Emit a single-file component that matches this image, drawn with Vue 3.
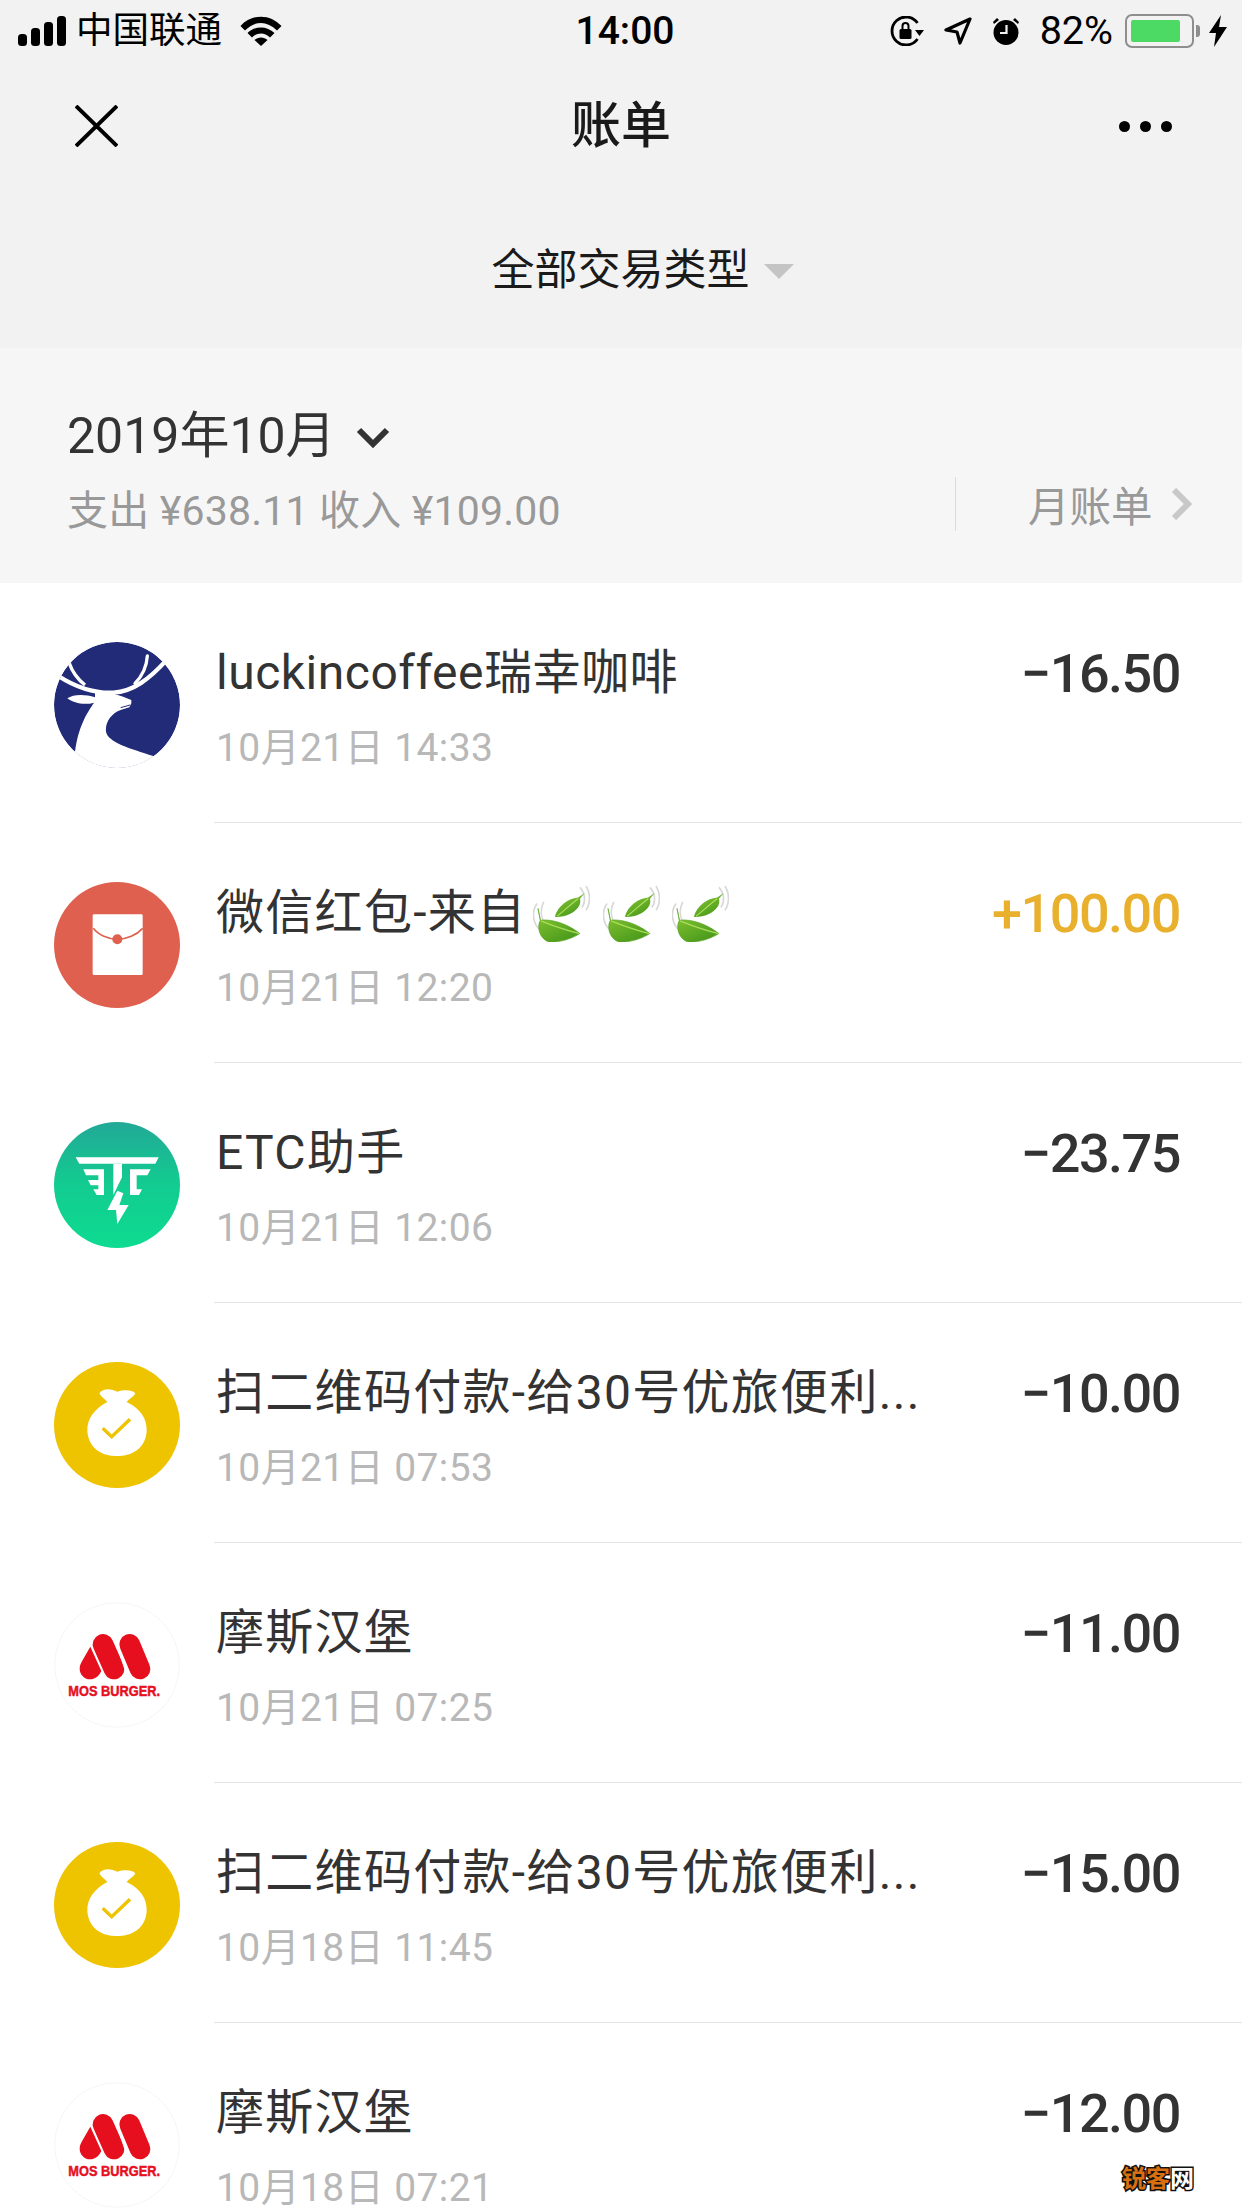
<script setup>
const bills = [
  { name: 'luckincoffee瑞幸咖啡', time: '10月21日 14:33', amount: '−16.50', icon: 'luckin', latin: true },
  { name: '微信红包-来自', time: '10月21日 12:20', amount: '+100.00', icon: 'packet', income: true, leaves: 3 },
  { name: 'ETC助手', time: '10月21日 12:06', amount: '−23.75', icon: 'etc' },
  { name: '扫二维码付款-给30号优旅便利...', time: '10月21日 07:53', amount: '−10.00', icon: 'bag' },
  { name: '摩斯汉堡', time: '10月21日 07:25', amount: '−11.00', icon: 'mos' },
  { name: '扫二维码付款-给30号优旅便利...', time: '10月18日 11:45', amount: '−15.00', icon: 'bag' },
  { name: '摩斯汉堡', time: '10月18日 07:21', amount: '−12.00', icon: 'mos' }
]
</script>

<template>
  <div class="page">
    <header class="top">
      <div class="status">
        <div class="status-left">
          <div class="signal"><i></i><i></i><i></i><i></i></div>
          <span class="carrier">中国联通</span>
          <svg class="wifi" viewBox="0 0 42 30">
            <path d="M0.5 10 C12 -2.5 30 -2.5 41.5 10 L37 14.5 C27 4.500 15 4.500 5 14.500 Z" fill="#000" />
            <path d="M7.500 17 C15 9.500 27 9.500 34.500 17 L30 21.500 C24.500 16 17.500 16 12 21.500 Z" fill="#000" />
            <path d="M14.500 24 C18 20.500 24 20.500 27.500 24 L21 30 Z" fill="#000" />
          </svg>
        </div>
        <div class="clock">14:00</div>
        <div class="status-right">
          <svg class="st-lock" viewBox="0 0 34 30">
            <path d="M27.500 7 A14 14 0 1 0 27.500 23" fill="none" stroke="#000" stroke-width="2.800" />
            <path d="M25 14 L34 14 L29.500 20 Z" fill="#000" />
            <rect x="9.500" y="13" width="12" height="10" rx="1.500" fill="#000" />
            <path d="M12.500 13 V10 A3 3 0 0 1 18.500 10 V13" fill="none" stroke="#000" stroke-width="2" />
          </svg>
          <svg class="st-loc" viewBox="0 0 28 28">
            <path d="M26 2 L2 13 L13 15 L16 26 Z" fill="none" stroke="#000" stroke-width="3.200" stroke-linejoin="round" />
          </svg>
          <svg class="st-alarm" viewBox="0 0 28 28">
            <circle cx="14" cy="15.500" r="12.500" fill="#000" />
            <path d="M1 5 L5 1 L7 3 L2 7 Z M27 5 L23 1 L21 3 L26 7 Z" fill="#000" />
            <path d="M14.500 8 V16 H8" fill="none" stroke="#f2f2f2" stroke-width="2.200" />
          </svg>
          <span class="percent">82%</span>
          <div class="battery"><div class="battery-fill"></div></div>
          <div class="battery-nub"></div>
          <svg class="st-bolt" viewBox="0 0 18 32">
            <path d="M12 0 L0 18 H7 L5 32 L18 12 H10 Z" fill="#000" />
          </svg>
        </div>
      </div>

      <nav class="nav">
        <svg class="close" viewBox="0 0 43 42">
          <path d="M1 1 L42 41 M42 1 L1 41" stroke="#000" stroke-width="4" fill="none" />
        </svg>
        <div class="nav-title">账单</div>
        <div class="more"><i></i><i></i><i></i></div>
      </nav>

      <div class="filter">
        <span>全部交易类型</span>
        <div class="filter-arrow"></div>
      </div>
    </header>

    <section class="month">
      <div class="month-info">
        <div class="month-title">
          <span>2019年10月</span>
          <svg class="month-chevron" viewBox="0 0 34 21">
            <path d="M3 3 L17 17 L31 3" fill="none" stroke="#333" stroke-width="6" />
          </svg>
        </div>
        <div class="month-sum">支出 ¥638.11 收入 ¥109.00</div>
      </div>
      <div class="month-link">
        <span>月账单</span>
        <svg class="link-chevron" viewBox="0 0 21 32">
          <path d="M3 2 L17 16 L3 30" fill="none" stroke="#c8c8c8" stroke-width="6" />
        </svg>
      </div>
    </section>

    <main class="list">
      <div v-for="(bill, i) in bills" :key="i" class="row">
        <div class="avatar">
          <svg v-if="bill.icon === 'luckin'" viewBox="72 66 378 378">
            <clipPath id="deer-clip"><circle cx="261" cy="255" r="189" /></clipPath>
            <g clip-path="url(#deer-clip)">
              <circle cx="261" cy="255" r="189" fill="#222b78" />
              <path d="M135 395 C145 320 170 280 192 248 C165 256 130 250 112 235 C130 222 165 222 195 232 L195 212 L252 222 C270 226 290 234 304 240 L304 250 L298 262 L272 270 C245 280 225 305 228 335 C235 368 300 385 370 408 L370 460 L130 460 Z" fill="#fff" />
              <path d="M85 168 C150 210 200 220 250 218 C310 215 360 175 408 122" fill="none" stroke="#fff" stroke-width="13" />
              <path d="M118 130 C125 150 140 175 165 195" fill="none" stroke="#fff" stroke-width="10" />
              <path d="M352 108 C350 140 340 165 315 190" fill="none" stroke="#fff" stroke-width="10" stroke-linecap="round" />
              <path d="M272 263 L300 255" stroke="#222b78" stroke-width="3" fill="none" />
            </g>
          </svg>

          <svg v-else-if="bill.icon === 'packet'" viewBox="72 66 378 378">
            <circle cx="261" cy="255" r="189" fill="#e0604f" />
            <rect x="188" y="163" width="150" height="182" rx="4" fill="#fff" />
            <path d="M190 205 C205 225 235 238 262 238 C290 238 320 225 338 205" fill="none" stroke="#e0604f" stroke-width="5" />
            <circle cx="262" cy="238" r="15" fill="#e0604f" />
          </svg>

          <svg v-else-if="bill.icon === 'etc'" viewBox="72 66 378 378">
            <linearGradient id="etc-bg" x1="0" y1="0" x2="0" y2="1">
              <stop offset="0" stop-color="#22a997" />
              <stop offset="0.5" stop-color="#12cc90" />
              <stop offset="1" stop-color="#0edb91" />
            </linearGradient>
            <circle cx="261" cy="255" r="189" fill="url(#etc-bg)" />
            <path d="M137 172 H386 L376 191 H148 Z" fill="#fff" />
            <path d="M250 191 H276 V232 L250 285 Z" fill="#fff" />
            <path d="M160 208 H222 V285 H200 L190 268 H205 V256 H182 L174 240 H205 V226 H168 Z" fill="#fff" />
            <path d="M300 208 H362 L352 226 H320 V268 H336 L327 285 H300 Z" fill="#fff" />
            <path d="M262 272 L232 330 H258 L262 372 L296 315 H268 L280 280 Z" fill="#fff" />
          </svg>

          <svg v-else-if="bill.icon === 'bag'" viewBox="72 66 378 378">
            <circle cx="261" cy="255" r="189" fill="#eec300" />
            <path d="M208 160 C222 142 245 148 262 155 C280 150 305 148 316 160 C310 172 296 178 290 186 C330 205 352 235 350 275 C345 330 300 348 262 348 C220 348 178 330 172 275 C170 235 195 205 232 186 C225 178 214 172 208 160 Z" fill="#fff" />
            <path d="M218 265 L245 290 L300 238" fill="none" stroke="#eec300" stroke-width="10" />
          </svg>

          <svg v-else viewBox="72 36 378 378">
            <circle cx="261" cy="225" r="187" fill="#fff" stroke="#f0f0f0" stroke-width="2" />
            <path d="M181 170 L214 243 C205 262 192 268 180 268 C162 268 149 252 149 236 C149 226 153 220 156 214 Z" fill="#e60f1e" />
            <path d="M219 163 L252 237" stroke="#e60f1e" stroke-width="62" stroke-linecap="round" fill="none" />
            <path d="M299 163 L330 237" stroke="#e60f1e" stroke-width="62" stroke-linecap="round" fill="none" />
            <path d="M256 150 L290 250" stroke="#fff" stroke-width="5" fill="none" />
            <text x="115" y="318" class="mos-text" textLength="275" lengthAdjust="spacingAndGlyphs">MOS BURGER.</text>
          </svg>
        </div>

        <div class="row-body">
          <div class="row-main">
            <div class="row-name" :class="{ latin: bill.latin }">
              <span class="row-name-text">{{ bill.name }}</span>
              <svg v-for="n in bill.leaves || 0" :key="n" class="leaf" viewBox="50 75 170 170">
                <defs>
                  <linearGradient :id="'leaf-grad-' + n" x1="0" y1="0" x2="0.6" y2="1">
                    <stop offset="0" stop-color="#8ecb35" />
                    <stop offset="1" stop-color="#4a9a1c" />
                  </linearGradient>
                </defs>
                <path d="M190 82 C206 100 208 125 196 142 M208 78 C222 100 222 130 208 150 M82 125 C70 150 74 175 88 192 M62 130 C44 155 50 190 70 208" fill="none" stroke="#d8d8d8" stroke-width="5" />
                <path d="M65 145 L72 180 C60 200 70 240 102 246 C140 245 170 232 190 220 C160 195 110 175 72 180 Z" :fill="'url(#leaf-grad-' + n + ')'" stroke="#5aa321" stroke-width="2" />
                <path d="M74 182 C105 195 150 210 188 220" fill="none" stroke="#a9dd58" stroke-width="4" />
                <path d="M115 170 C125 135 155 115 185 112 L205 98 L190 116 C198 140 165 172 115 170 Z" :fill="'url(#leaf-grad-' + n + ')'" />
                <path d="M122 168 C145 150 165 130 185 116" fill="none" stroke="#b3e063" stroke-width="3" />
              </svg>
            </div>
            <div class="row-time">{{ bill.time }}</div>
          </div>
          <div class="row-amount" :class="{ income: bill.income }">{{ bill.amount }}</div>
        </div>
      </div>
    </main>

    <div class="watermark"><span class="wm-orange">锐客</span><span class="wm-white">网</span></div>
  </div>
</template>

<style>
html,
body {
  margin: 0;
  background: #fff;
}
</style>

<style scoped>
.page {
  position: relative;
  width: 1242px;
  height: 2208px;
  overflow: hidden;
  background: #fff;
  font-family: Roboto, "Noto Sans CJK SC", sans-serif;
  color: #333;
}

/* top bar */
.top {
  height: 348px;
  background: #f2f2f2;
}

.status {
  height: 62px;
  display: grid;
  grid-template-columns: 1fr auto 1fr;
  align-items: center;
  color: #000;
}

.status-left {
  display: flex;
  align-items: center;
  padding-left: 18px;
}

.signal {
  display: flex;
  align-items: flex-end;
  gap: 4px;
  height: 30px;
}

.signal i {
  display: block;
  width: 9px;
  border-radius: 3.5px;
  background: #000;
}

.signal i:nth-child(1) { height: 12px; }
.signal i:nth-child(2) { height: 18px; }
.signal i:nth-child(3) { height: 24px; }
.signal i:nth-child(4) { height: 30px; }

.carrier {
  margin-left: 10px;
  font-size: 36.500px;
  line-height: 44px;
}

.wifi {
  width: 42px;
  height: 30px;
  margin-left: 18px;
}

.clock {
  font-size: 39px;
  font-weight: 500;
  line-height: 44px;
  padding-left: 8px;
}

.status-right {
  display: flex;
  align-items: center;
  justify-content: flex-end;
  padding-right: 15px;
}

.st-lock { width: 34px; height: 30px; }
.st-loc { width: 28px; height: 28px; margin-left: 20px; }
.st-alarm { width: 28px; height: 28px; margin-left: 20px; }

.percent {
  margin-left: 20px;
  font-size: 39.500px;
  line-height: 44px;
}

.battery {
  box-sizing: border-box;
  width: 69px;
  height: 34px;
  margin-left: 12px;
  padding: 4px 12px 4px 4px;
  border: 2.500px solid #8e8e8e;
  border-radius: 7px;
}

.battery-fill {
  height: 100%;
  background: #4cd964;
  border-radius: 2px;
}

.battery-nub {
  width: 4px;
  height: 12px;
  margin-left: 2px;
  background: #8e8e8e;
  border-radius: 0 3px 3px 0;
}

.st-bolt { width: 18px; height: 32px; margin-left: 9px; }

.nav {
  height: 128px;
  display: grid;
  grid-template-columns: 1fr auto 1fr;
  align-items: center;
}

.close {
  width: 43px;
  height: 42px;
  margin-left: 75px;
}

.nav-title {
  font-size: 50px;
  font-weight: 500;
  line-height: 60px;
  color: #1a1a1a;
}

.more {
  display: flex;
  justify-content: flex-end;
  gap: 10px;
  padding-right: 70px;
}

.more i {
  display: block;
  width: 11px;
  height: 11px;
  border-radius: 50%;
  background: #000;
}

.filter {
  box-sizing: border-box;
  height: 158px;
  padding: 0 0 6px 43px;
  display: flex;
  align-items: center;
  justify-content: center;
  gap: 14px;
  font-size: 43px;
  color: #1a1a1a;
}

.filter-arrow {
  width: 0;
  height: 0;
  margin-top: 10px;
  border-left: 15px solid transparent;
  border-right: 15px solid transparent;
  border-top: 15px solid #c4c4c4;
}

/* month summary */
.month {
  box-sizing: border-box;
  height: 235px;
  padding: 0 52px 0 67px;
  display: flex;
  justify-content: space-between;
  background: #f6f6f6;
}

.month-info {
  padding-top: 58px;
}

.month-title {
  display: flex;
  align-items: center;
  font-size: 50px;
  line-height: 60px;
  color: #333;
}

.month-chevron {
  width: 34px;
  height: 21px;
  margin-left: 20px;
  margin-top: 2px;
}

.month-sum {
  margin-top: 20px;
  font-size: 41px;
  letter-spacing: 0.2px;
  line-height: 50px;
  color: #999;
}

.month-link {
  box-sizing: border-box;
  flex: none;
  display: flex;
  align-items: center;
  gap: 18px;
  width: 235px;
  height: 54px;
  margin-top: 129px;
  padding-left: 72px;
  border-left: 1px solid #dcdcdc;
  font-size: 41.500px;
  white-space: nowrap;
  color: #999;
}

.link-chevron {
  width: 21px;
  height: 32px;
  flex: none;
}

/* bill rows */
.row {
  display: flex;
  height: 240px;
}

.avatar {
  flex: none;
  width: 126px;
  height: 126px;
  margin: 59px 34px 0 54px;
}

.avatar svg {
  display: block;
  width: 126px;
  height: 126px;
}

.mos-text {
  font-family: "Liberation Sans", sans-serif;
  font-size: 46px;
  font-weight: 700;
  fill: #e60f1e;
  stroke: #e60f1e;
  stroke-width: 1.500px;
}

.row-body {
  box-sizing: border-box;
  flex: 1;
  min-width: 0;
  display: flex;
  justify-content: space-between;
  padding: 60px 62px 0 2px;
  border-bottom: 1px solid #e4e4e4;
}

.row-name {
  display: flex;
  align-items: center;
  height: 60px;
  font-size: 48px;
  letter-spacing: 1.300px;
  line-height: 60px;
  white-space: nowrap;
  color: #333;
}

.row-name.latin {
  letter-spacing: 0.5px;
}

.leaf {
  flex: none;
  width: 57px;
  height: 57px;
  margin-left: 12.500px;
}

.leaf:first-of-type {
  margin-left: 7px;
}

.row-time {
  margin-top: 20px;
  font-size: 39px;
  letter-spacing: 0.4px;
  line-height: 50px;
  color: #b8b8b8;
}

.row-amount {
  margin-top: 1px;
  font-size: 54px;
  font-weight: 500;
  letter-spacing: -1.500px;
  line-height: 60px;
  color: #333;
}

.row-amount.income {
  color: #e8b02c;
}

.watermark {
  position: absolute;
  left: 1122px;
  top: 2164px;
  font-family: "Noto Sans CJK SC", sans-serif;
  font-size: 24px;
  font-weight: 700;
  line-height: 26px;
  -webkit-text-stroke: 3px #111;
  paint-order: stroke fill;
}

.wm-orange { color: #d96f10; }
.wm-white { color: #fff; }
</style>
